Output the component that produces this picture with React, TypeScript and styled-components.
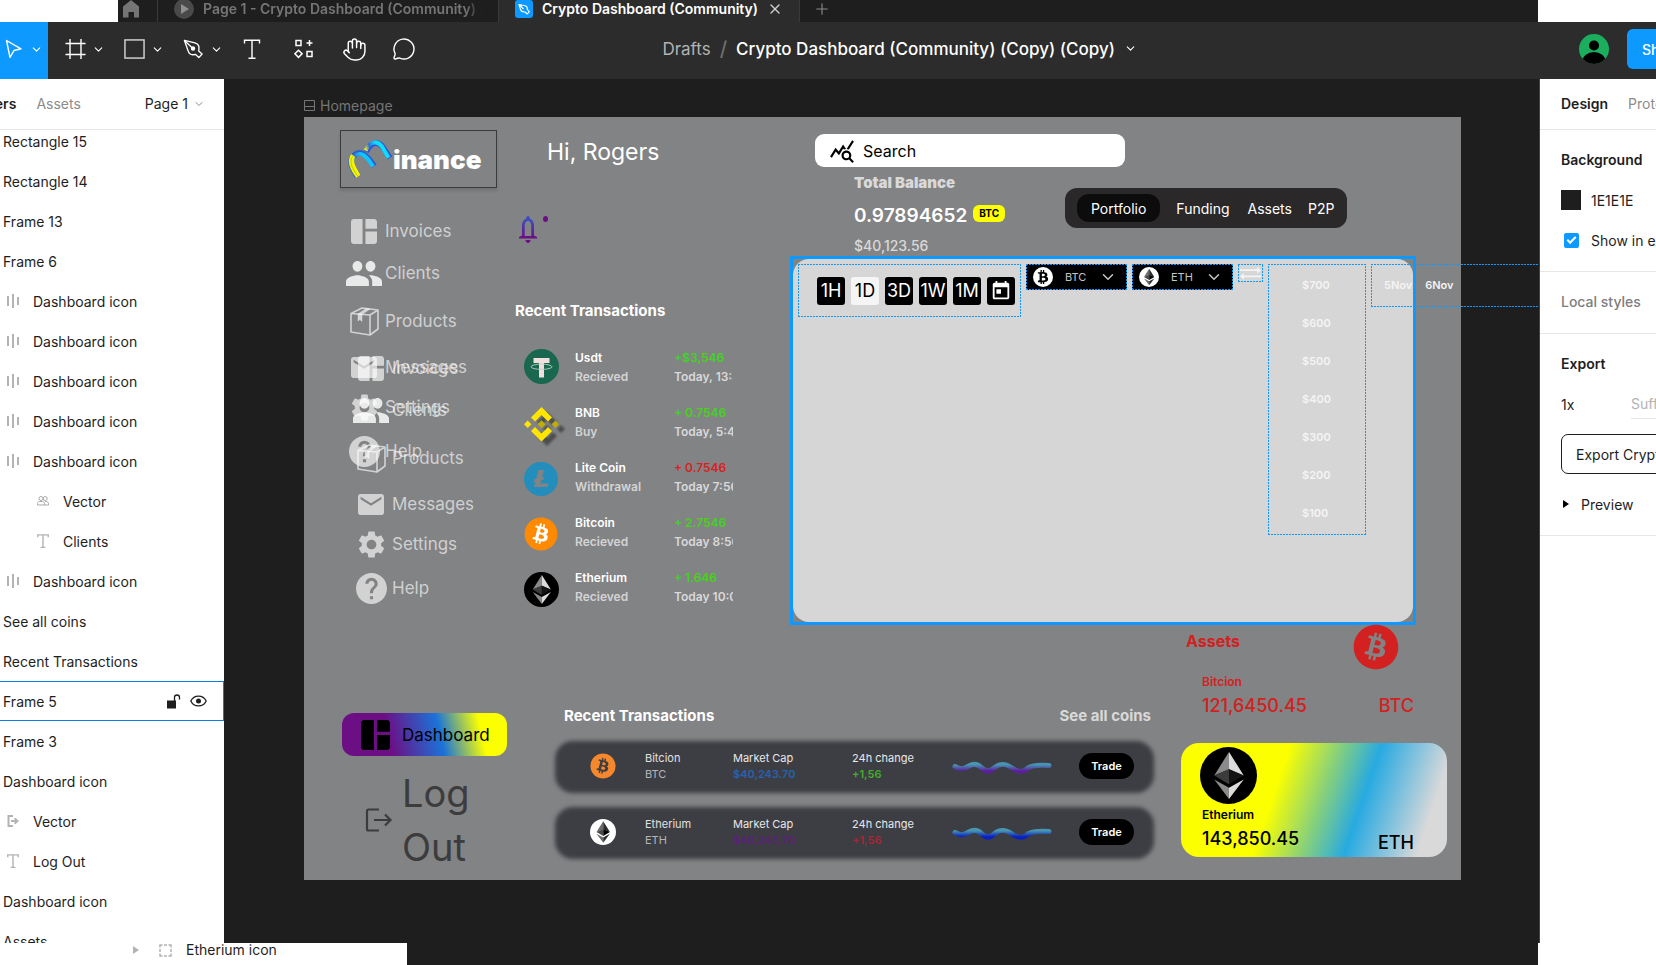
import React from "react";
import styled, { createGlobalStyle, css } from "styled-components";
import { Hand, MessageCircle, ChevronDown, X, Plus } from "lucide-react";
import { MdQueryStats, MdToday } from "react-icons/md";
import { FaBitcoin, FaBtc } from "react-icons/fa";

const BLUE = "#0d99ff";

const Global = createGlobalStyle`
  *, *::before, *::after { box-sizing: border-box; }
  body { margin: 0; background: #fff; font-family: Inter, "Liberation Sans", sans-serif; color: #1e1e1e; }
  button, input, select { font: inherit; color: inherit; margin: 0; padding: 0; border: 0; background: none; }
  ul { list-style: none; margin: 0; padding: 0; }
  h1, h2, h3, p { margin: 0; font-weight: inherit; }
  a { color: inherit; text-decoration: none; }
  svg { display: block; flex: none; }
`;

/* ---------- application shell ---------- */

const Shell = styled.div`
  height: 100vh;
  display: flex;
  flex-direction: column;
  overflow: hidden;
  white-space: nowrap;
`;

const TabStrip = styled.nav`
  flex: none;
  display: flex;
  height: 22px;
  margin: 0 118px;
  background: #1e1e1e;
  color: #757575;
  font-size: 14px;
  font-weight: 600;
`;

const Tab = styled.button<{ $active?: boolean; $width: number }>`
  flex: none;
  width: ${(p) => p.$width}px;
  display: flex;
  align-items: center;
  gap: 9px;
  padding: 0 16px 4px 16px;
  overflow: hidden;
  border-right: 1px solid #3a3a3a;
  background: ${(p) => (p.$active ? "#2c2c2c" : "transparent")};
  color: ${(p) => (p.$active ? "#fff" : "inherit")};
  line-height: 18px;
`;

const TabIconButton = styled.button<{ $divided?: boolean }>`
  width: 40px;
  padding: 0 0 4px 5px;
  display: flex;
  align-items: center;
  ${(p) => p.$divided ? css`border-right: 1px solid #3a3a3a;` : css`padding-left: 13px;`}
`;

const TabLabel = styled.span<{ $fade?: boolean }>`
  flex: 1;
  overflow: hidden;
  text-align: left;
  ${(p) => p.$fade && css`mask-image: linear-gradient(90deg, #000 94%, transparent);`}
`;

const Toolbar = styled.header`
  flex: none;
  height: 57px;
  display: grid;
  grid-template-columns: 40% auto 1fr;
  align-items: center;
  background: #2c2c2c;
  color: #fff;
`;

const Tools = styled.div`
  display: flex;
  align-items: center;
  height: 57px;
`;

const Tool = styled.button<{ $active?: boolean; $wide?: boolean }>`
  height: 57px;
  width: ${(p) => (p.$active ? 48 : p.$wide ? 59 : 50)}px;
  display: flex;
  align-items: center;
  justify-content: ${(p) => (p.$active ? "space-between" : "flex-start")};
  gap: 6px;
  padding: ${(p) => (p.$active ? "0 5px 3px" : "0 0 3px 17px")};
  background: ${(p) => (p.$active ? BLUE : "transparent")};
`;

const FileTitle = styled.button`
  display: flex;
  align-items: center;
  gap: 9px;
  padding-bottom: 4px;
  font-size: 17px;
  font-weight: 500;
  line-height: 24px;
`;
const Muted = styled.span`
  color: #b3b3b3;
  font-weight: 400;
`;
const Slash = styled.span`
  color: #6e6e6e;
  font-size: 20px;
`;

const Account = styled.div`
  display: flex;
  justify-content: flex-end;
  align-items: center;
  gap: 18px;
  padding-bottom: 3px;
  overflow: hidden;
`;
const ShareClip = styled.div`
  width: 29px;
  overflow: hidden;
`;
const ShareButton = styled.button`
  height: 40px;
  padding: 0 15px;
  border-radius: 6px;
  background: ${BLUE};
  color: #fff;
  font-size: 14px;
  font-weight: 500;
`;

const Workspace = styled.div`
  flex: 1;
  min-height: 0;
  display: grid;
  grid-template-columns: 224px minmax(0, 1fr) 116px;
  grid-template-rows: minmax(0, 1fr);
`;

/* ---------- layers panel ---------- */

const Panel = styled.aside`
  min-width: 0;
  display: flex;
  flex-direction: column;
  overflow: hidden;
  background: #fff;
  font-size: 14px;
`;

const PanelTabs = styled.div<{ $shift?: boolean }>`
  flex: none;
  height: 51px;
  display: flex;
  align-items: center;
  gap: 20px;
  padding: 0 0 1px 21px;
  ${(p) => p.$shift && css`
    justify-content: flex-end;
    padding: 0 19px 1px 0;
  `}
  border-bottom: 1px solid #e6e6e6;
`;
const PanelTab = styled.button<{ $on?: boolean }>`
  color: ${(p) => (p.$on ? "#1e1e1e" : "#8c8c8c")};
  font-weight: ${(p) => (p.$on ? 600 : 400)};
`;
const PagePicker = styled.button`
  display: flex;
  align-items: center;
  gap: 5px;
  margin-left: 44px;
`;

const LayerList = styled.ul`
  flex: 1;
  min-height: 0;
  display: flex;
  flex-direction: column;
  overflow: hidden;
  justify-content: flex-start;
`;
const LayerRow = styled.li<{ $level: number; $hover?: boolean }>`
  flex: none;
  height: 40px;
  display: flex;
  align-items: center;
  gap: 10px;
  padding: 0 17px 0 ${(p) => 3 + Math.max(0, p.$level - 1) * 30}px;
  &:first-child { margin-top: -9px; }
  ${(p) => p.$hover && css`box-shadow: inset -1px 1px 0 #0a7fdd, inset 0 -1px 0 #0a7fdd;`}
`;
const LayerIcon = styled.span`
  width: 20px;
  display: flex;
  justify-content: center;
  color: #b3b3b3;
`;
const LayerActions = styled.span`
  margin-left: auto;
  display: flex;
  align-items: center;
  gap: 9px;
`;

const BottomStrip = styled.footer`
  flex: none;
  height: 22px;
  display: grid;
  grid-template-columns: 407px 1fr 118px;
`;
const StripLayer = styled.div`
  display: flex;
  align-items: flex-start;
  gap: 14px;
  padding-left: 133px;
  background: #fff;
  font-size: 14px;
  line-height: 13px;
  svg { margin-top: 1px; }
  svg:first-child { margin: 3px 6px 0 0; }
`;
const StripCanvas = styled.div`
  background: #1e1e1e;
`;

/* ---------- design panel ---------- */

const Section = styled.section`
  display: flex;
  flex-direction: column;
  padding: 10px 0 11px 21px;
  border-bottom: 1px solid #e6e6e6;
`;
const SectionTitle = styled.h2<{ $muted?: boolean }>`
  height: 40px;
  line-height: 40px;
  font-size: 14px;
  font-weight: ${(p) => (p.$muted ? 500 : 600)};
  color: ${(p) => (p.$muted ? "#7d7d7d" : "#1e1e1e")};
`;
const Field = styled.div`
  height: 40px;
  display: flex;
  align-items: center;
  gap: 10px;
`;
const Swatch = styled.span`
  flex: none;
  width: 20px;
  height: 20px;
  background: #1e1e1e;
`;
const TextInput = styled.input<{ $underline?: boolean }>`
  width: 60px;
  height: 30px;
  outline: none;
  &::placeholder { color: #b3b3b3; opacity: 1; }
  ${(p) => p.$underline && css`border-bottom: 1px solid #e6e6e6;`}
`;
const CheckLabel = styled.label`
  display: flex;
  align-items: center;
  gap: 12px;
  padding-left: 3px;
`;
const Check = styled.input`
  appearance: none;
  flex: none;
  width: 15px;
  height: 15px;
  border-radius: 2px;
  background: ${BLUE};
  display: grid;
  place-items: center;
  &:checked::after {
    content: "";
    width: 9px;
    height: 5px;
    border: solid #fff;
    border-width: 0 0 2px 2px;
    transform: rotate(-45deg) translate(1px, -1px);
  }
`;
const ExportButton = styled.button`
  width: 220px;
  height: 40px;
  margin: 10px 0;
  padding-left: 14px;
  text-align: left;
  border: 1px solid #1e1e1e;
  border-radius: 7px;
`;
const PreviewToggle = styled.button`
  height: 40px;
  display: flex;
  align-items: center;
  gap: 12px;
  padding-left: 2px;
`;

/* ---------- canvas and artboard ---------- */

const Canvas = styled.main`
  min-width: 0;
  overflow: hidden;
  padding: 17px 78px 0 80px;
  background: #1e1e1e;
  border-right: 1px solid #444;
`;
const FrameLabel = styled.div`
  height: 21px;
  display: flex;
  align-items: center;
  gap: 5px;
  padding-bottom: 2px;
  color: #757575;
  font-size: 14px;
`;

const Artboard = styled.div`
  display: grid;
  grid-template-columns: 211px minmax(0, 1fr);
  height: 763px;
  background: #828384;
  color: #fff;
`;

const Sidebar = styled.div`
  display: flex;
  flex-direction: column;
  align-items: flex-start;
  padding: 13px 0 0 36px;
`;
const Brand = styled.h1`
  width: 157px;
  height: 58px;
  display: flex;
  align-items: center;
  padding-left: 7px;
  border: 1px solid #3b3b3b;
  box-shadow: 0 3px 3px rgba(0, 0, 0, 0.12);
  font-size: 26px;
  font-weight: 900;
`;
const NavStack = styled.div`
  display: grid;
  margin: 23px 0 101px 6px;
`;
const NavList = styled.ul<{ $lower?: boolean }>`
  grid-area: 1 / 1;
  align-self: start;
  display: grid;
  grid-template-rows: 40px 44px 52px 40px 40px 48px;
  ${(p) => p.$lower && css`margin: 137px 0 0 7px;`}
`;
const NavLink = styled.a`
  height: 100%;
  display: grid;
  grid-template-columns: 36px auto;
  align-items: center;
  justify-items: center;
  gap: 3px;
  color: rgba(255, 255, 255, 0.64);
  font-size: 17px;
  span { justify-self: start; }
`;
const DashboardButton = styled.button`
  width: 165px;
  height: 43px;
  margin-left: 2px;
  padding-left: 19px;
  display: flex;
  align-items: center;
  gap: 12px;
  border-radius: 12px;
  background: linear-gradient(77deg, #6c0f85 29%, #1b73d8 59%, #fbff00 83%);
  color: #000;
  font-size: 17px;
`;
const LogOut = styled.button`
  margin: 10px 0 0 25px;
  display: grid;
  grid-template-columns: 28px 70px;
  gap: 9px;
  align-items: center;
  color: #3c3c3c;
  font-size: 38px;
  line-height: 54px;
  text-align: left;
  white-space: normal;
`;

const Content = styled.div`
  min-width: 0;
  display: flex;
  flex-direction: column;
`;
const TopArea = styled.div`
  display: flex;
  gap: 57px;
  padding-right: 45px;
  height: 508px;
`;

const Activity = styled.section`
  flex: none;
  width: 218px;
  overflow: hidden;
  padding-top: 17px;
`;
const Greeting = styled.p`
  padding-left: 32px;
  font-size: 23px;
  line-height: 36px;
`;
const BellButton = styled.button`
  display: flex;
  align-items: flex-start;
  gap: 6px;
  margin: 46px 0 56px 4px;
`;
const Heading = styled.h2<{ $dim?: boolean }>`
  font-size: 15px;
  font-weight: 700;
  line-height: 24px;
  color: ${(p) => (p.$dim ? "#d9d9d9" : "#fff")};
`;
const TxList = styled.ul`
  margin-top: 16px;
`;
const TxRow = styled.li`
  height: 55px;
  display: grid;
  grid-template-columns: 38px 84px 1fr;
  column-gap: 15px;
  align-items: center;
  padding-left: 7px;
  font-size: 12px;
  line-height: 19px;
  svg { justify-self: center; }
  & + & > svg { margin-top: 5px; }
`;
const TxLine = styled.p<{ $tone?: string }>`
  color: ${(p) => p.$tone || "#fff"};
  font-weight: 600;
`;

const Main = styled.section`
  flex: 1;
  min-width: 0;
  display: flex;
  flex-direction: column;
  padding-top: 17px;
`;
const SearchBox = styled.label`
  width: 310px;
  height: 33px;
  margin-left: 25px;
  display: flex;
  align-items: center;
  gap: 8px;
  padding-left: 14px;
  border-radius: 9px;
  background: #fff;
  color: #000;
  input {
    width: 220px;
    font-size: 16px;
    outline: none;
  }
  input::placeholder { color: #000; opacity: 1; }
`;
const Overview = styled.div`
  height: 89px;
  display: flex;
  align-items: flex-start;
`;
const Balance = styled.div`
  flex: none;
  width: 275px;
  padding: 4px 0 0 64px;
  color: #d9d9d9;
`;
const BalanceTitle = styled.h2`
  font-size: 15px;
  font-weight: 900;
  line-height: 24px;
`;
const BalanceRow = styled.div`
  display: flex;
  gap: 6px;
  align-items: center;
  margin: 7px 0 6px;
`;
const BalanceValue = styled.strong`
  color: #fff;
  font-size: 19px;
  font-weight: 600;
  line-height: 28px;
`;
const CoinBadge = styled.span`
  height: 17px;
  padding: 0 6px;
  margin-bottom: 5px;
  border-radius: 6px;
  background: #fbff00;
  color: #000;
  font-size: 10px;
  font-weight: 700;
  line-height: 17px;
`;
const BalanceFiat = styled.p`
  font-size: 14px;
  font-weight: 500;
  line-height: 20px;
`;
const ViewTabs = styled.nav`
  display: flex;
  align-items: center;
  height: 40px;
  margin-top: 21px;
  padding: 0 13px 0 12px;
  gap: 16px;
  border-radius: 12px;
  background: #2b2829;
`;
const ViewTab = styled.button<{ $on?: boolean }>`
  height: 28px;
  padding: ${(p) => (p.$on ? "0 14px" : "0")};
  border-radius: 12px;
  background: ${(p) => (p.$on ? "#0c0c0c" : "transparent")};
  font-size: 14px;
  &:nth-child(2) { padding-right: 2px; }
`;

const Selection = styled.div`
  height: 369px;
  border: 3px solid ${BLUE};
  background: #828384;
`;
const Chart = styled.div`
  height: 100%;
  display: flex;
  align-items: flex-start;
  gap: 5px;
  padding: 5px 0 0 5px;
  border-radius: 16px;
  background: #d6d6d6;
`;
const stripes = (angle: string) =>
  `repeating-linear-gradient(${angle}, ${BLUE} 0 2px, transparent 2px 3px)`;
const dotted = css<{ $fill?: string }>`
  flex: none;
  background:
    ${stripes("90deg")} top / 100% 1px no-repeat,
    ${stripes("90deg")} bottom / 100% 1px no-repeat,
    ${stripes("0deg")} left / 1px 100% no-repeat,
    ${stripes("0deg")} right / 1px 100% no-repeat,
    ${(p) => p.$fill || "transparent"};
`;
const RangeGroup = styled.div`
  ${dotted}
  width: 223px;
  height: 53px;
  display: flex;
  align-items: center;
  gap: 6px;
  padding-left: 19px;
`;
const RangeButton = styled.button<{ $on?: boolean }>`
  width: 28px;
  height: 28px;
  display: grid;
  place-items: center;
  border-radius: 3px;
  background: ${(p) => (p.$on ? "#f5f5f5" : "#000")};
  color: ${(p) => (p.$on ? "#000" : "#fff")};
  font-size: 18px;
`;
const CoinSelect = styled.label`
  ${dotted}
  width: 101px;
  height: 26px;
  display: flex;
  align-items: center;
  padding: 0 10px 0 7px;
  color: #c4c4c4;
  font-size: 11px;
  select {
    flex: 1;
    min-width: 0;
    appearance: none;
    outline: none;
    padding-left: 12px;
  }
`;
const SwapButton = styled.button`
  ${dotted}
  width: 25px;
  height: 18px;
  display: grid;
  place-items: center;
`;
const Axis = styled.ul<{ $dates?: boolean }>`
  ${dotted}
  display: flex;
  color: #f4f4f4;
  font-size: 11px;
  font-weight: 600;
  line-height: 38px;
  ${(p) => p.$dates
    ? css`width: 400px; height: 43px; gap: 13px; padding: 2px 0 0 13px; margin-right: -280px;`
    : css`width: 98px; height: 271px; flex-direction: column; padding: 2px 0 0 34px;`}
`;

const BottomArea = styled.div`
  display: flex;
  gap: 27px;
  padding: 0 14px 0 40px;
`;
const Markets = styled.section`
  flex: 1;
  min-width: 0;
  padding-top: 79px;
`;
const MarketsHead = styled.div`
  display: flex;
  justify-content: space-between;
  padding: 0 3px 0 9px;
  margin-bottom: 13px;
`;
const MarketRow = styled.li`
  position: relative;
  isolation: isolate;
  height: 52px;
  margin-bottom: 14px;
  display: grid;
  grid-template-columns: 55px 88px 119px 101px 1fr auto;
  align-items: center;
  padding: 0 20px 3px 35px;
  font-size: 11px;
  line-height: 16px;
  &::before {
    content: "";
    position: absolute;
    inset: 0;
    z-index: -1;
    border-radius: 18px;
    background: #3d3e44;
    filter: blur(2px);
  }
`;
const Tone = styled.p<{ $tone: string; $strong?: boolean }>`
  color: ${(p) => p.$tone};
  font-weight: ${(p) => (p.$strong ? 600 : 400)};
`;
const TradeButton = styled.button`
  width: 55px;
  height: 26px;
  border-radius: 13px;
  background: #000;
  font-size: 11px;
  font-weight: 600;
`;

const Assets = styled.section`
  flex: none;
  width: 266px;
`;
const AssetHead = styled.div`
  height: 46px;
  display: flex;
  justify-content: space-between;
  padding: 0 48px 0 5px;
  color: #d32020;
  h2 { font-size: 16px; font-weight: 700; line-height: 32px; }
  svg { margin-top: -1px; }
`;
const AssetBody = styled.div<{ $tone: string }>`
  padding: 1px 33px 0 21px;
  color: ${(p) => p.$tone};
  font-weight: 500;
`;
const AssetName = styled.p`
  font-size: 12px;
  line-height: 20px;
  font-weight: 600;
`;
const AssetValue = styled.p<{ $drop?: boolean }>`
  display: flex;
  justify-content: space-between;
  font-size: 18px;
  line-height: 28px;
  ${(p) => p.$drop && css`span:last-child { margin-top: 4px; }`}
`;
const AssetCard = styled.div`
  height: 114px;
  margin-top: 23px;
  padding-top: 4px;
  border-radius: 18px;
  background: linear-gradient(109deg, #fbff00 36%, #27aae1 66%, #d9d9d9 90%);
  > svg { margin-left: 19px; }
`;

/* ---------- drawings ---------- */

const Chev = ({ size = 14, color = "#fff" }: { size?: number; color?: string }) => (
  <ChevronDown size={size} color={color} strokeWidth={2} />
);

const CursorIcon = () => (
  <svg width="17" height="20" viewBox="0 0 17 20" fill="none" stroke="#fff" strokeWidth="1.4" strokeLinejoin="round">
    <path d="M1.5 1.5l14.5 8.3-7 1.7-4 6.8z" />
  </svg>
);
const FrameIcon = () => (
  <svg width="21" height="20" viewBox="0 0 20 20" stroke="#fff" strokeWidth="1.4">
    <path d="M4.5 0v20M15.5 0v20M0 4.5h20M0 15.5h20" />
  </svg>
);
const RectIcon = () => (
  <svg width="21" height="22" viewBox="0 0 22 22" fill="none" stroke="#d6d6d6" strokeWidth="1.5">
    <rect x="1" y="1.5" width="20" height="19" />
  </svg>
);
const PenIcon = () => (
  <svg width="21" height="22" viewBox="0 0 22 22" fill="none" stroke="#fff" strokeWidth="1.4" strokeLinejoin="round">
    <path d="M1.5 2l11 2.600c3 .8 4.600 3.400 4.200 6.400l-.3 2 3.600 3.200-3.400 3.800-3.400-3.300-2.300.3c-2.800.2-4.700-1.200-5.500-4z" />
    <path d="M1.500 2l8.300 8" />
    <circle cx="10.500" cy="10.500" r="1.600" fill="#fff" />
  </svg>
);
const TextIcon = ({ size = 20, color = "#fff", w = 1.4 }: { size?: number; color?: string; w?: number }) => (
  <svg width={size} height={size} viewBox="0 0 20 20" fill="none" stroke={color} strokeWidth={w}>
    <path d="M2.500 4.500V1.200h15v3.300M10 1.200v18M6.500 19.200h7" />
  </svg>
);
const ResourcesIcon = () => (
  <svg width="22" height="20" viewBox="-1 0 20 20" fill="none" stroke="#fff" strokeWidth="1.5">
    <rect x="2" y="1.500" width="5" height="5" />
    <rect x="13" y="12.500" width="5" height="5" />
    <path d="M15.500 1v6M12.500 4h6M4.500 11.200l3.600 3.600-3.600 3.600-3.600-3.600z" />
  </svg>
);
const HomeIcon = () => (
  <svg width="16" height="18" viewBox="0 0 16 18" fill="#757575">
    <path d="M8 0l8 6.500V17.500h-5V12H5.500v5.500H0V6.500z" />
  </svg>
);
const PlayBadge = () => (
  <svg width="20" height="20" viewBox="0 0 20 20">
    <circle cx="10" cy="10" r="10" fill="#4a4a4a" />
    <path d="M7 5l8 5-8 5z" fill="#8f8f8f" />
  </svg>
);
const FileBadge = () => (
  <svg width="18" height="18" viewBox="0 0 18 18" fill="none" stroke="#fff" strokeWidth="1.100" strokeLinejoin="round">
    <rect width="18" height="18" rx="3" fill={BLUE} stroke="none" />
    <path d="M4 4.500l6 1.200c1.800.5 2.600 2 2.300 3.800l2 2.200-2 2.300-2.200-2c-2.600.3-4.200-.7-4.700-2.800zM4 4.500l4.500 4.500" />
  </svg>
);
const Avatar = () => (
  <svg width="30" height="30" viewBox="0 0 30 30">
    <clipPath id="avatar"><circle cx="15" cy="15" r="15" /></clipPath>
    <g clipPath="url(#avatar)">
      <rect width="30" height="30" fill="#1bae5e" />
      <circle cx="15" cy="11.500" r="5" />
      <ellipse cx="15" cy="27" rx="11.500" ry="9" />
    </g>
  </svg>
);

const BarsIcon = () => (
  <svg width="13" height="14" viewBox="0 0 13 14" fill="#b3b3b3">
    <rect y="2" width="2" height="10" /><rect x="5" width="2" height="14" /><rect x="10" y="3" width="2" height="8" />
  </svg>
);
const PeopleMini = () => (
  <svg width="12" height="12" viewBox="0 0 12 12" fill="none" stroke="#a8a8a8">
    <circle cx="4" cy="3.500" r="2" /><circle cx="8.200" cy="3.500" r="2" />
    <path d="M.5 10V8.500C.5 7 2 6.500 4 6.500s3.500.5 3.500 2V10zM8 6.500c2 0 3.500.5 3.500 2V10h-4" />
  </svg>
);
const ExitMini = () => (
  <svg width="13" height="12" viewBox="0 0 13 12" fill="none" stroke="#b3b3b3" strokeWidth="2">
    <path d="M6 1H1.500v10H6M4 6h4" /><path d="M8 3l3.500 3L8 9z" fill="#b3b3b3" stroke="#b3b3b3" strokeWidth="1" />
  </svg>
);
const UnlockIcon = () => (
  <svg width="14" height="15" viewBox="0 0 14 15">
    <rect x="0" y="6.500" width="9" height="8" fill="#1e1e1e" />
    <path d="M7.500 7V3.500a2.500 2.500 0 0 1 5 0V5.500" fill="none" stroke="#1e1e1e" strokeWidth="1.300" />
  </svg>
);
const EyeIcon = () => (
  <svg width="17" height="12" viewBox="0 0 17 12">
    <path d="M.8 6C4 -.6 13 -.6 16.200 6 13 12.600 4 12.600.8 6z" fill="none" stroke="#1e1e1e" strokeWidth="1.300" />
    <circle cx="8.500" cy="6" r="2.500" fill="#1e1e1e" />
  </svg>
);
const Triangle = ({ color }: { color: string }) => (
  <svg width="6" height="8" viewBox="0 0 6 8"><path d="M0 0l6 4-6 4z" fill={color} /></svg>
);
const DashedFrame = () => (
  <svg width="13" height="13" viewBox="0 0 13 13" fill="none" stroke="#b3b3b3" strokeWidth="1.500">
    <path d="M1 3.500V1h2.500M5 1h3M9.500 1H12v2.500M12 5v3M12 9.500V12H9.500M8 12H5M3.500 12H1V9.500M1 8V5" />
  </svg>
);

const LogoMark = () => (
  <svg width="45" height="38" viewBox="51 50 135 115" fill="none">
    <defs>
      <linearGradient id="mLow" x1="0" y1="1" x2="1" y2="0.300">
        <stop offset="0.300" stopColor="#fbff00" /><stop offset="0.500" stopColor="#3a76c8" /><stop offset="0.750" stopColor="#12c4ff" />
      </linearGradient>
      <linearGradient id="mHigh" x1="0" y1="0.800" x2="1" y2="0.500">
        <stop offset="0.080" stopColor="#e8f020" /><stop offset="0.300" stopColor="#2c6fd8" /><stop offset="0.600" stopColor="#10dcff" />
      </linearGradient>
    </defs>
    <path d="M106 86C118 58 142 50 156 72L177 104" stroke="#2b55d6" strokeWidth="17" />
    <path d="M104 82C116 55 138 50 152 68L173 104" stroke="url(#mHigh)" strokeWidth="12" />
    <path d="M78 160C62 134 52 112 68 97 90 77 108 96 130 129" stroke="#2b5fd0" strokeWidth="17" />
    <path d="M82 158C66 132 56 114 70 100 90 82 106 98 126 130" stroke="url(#mLow)" strokeWidth="12" />
    <path d="M81 160C62 134 54 112 66 97" stroke="#f2f500" strokeWidth="15" />
    <path d="M80 160C61 134 53 114 65 99" stroke="#8a8f10" strokeWidth="1.500" />
  </svg>
);

const TilesIcon = ({ w = 26, h = 25 }: { w?: number; h?: number }) => (
  <svg width={w} height={h} viewBox="3 3 18 18" preserveAspectRatio="none" fill="currentColor">
    <path d="M11 21H5c-1.100 0-2-.9-2-2V5c0-1.100.9-2 2-2h6v18zm2 0h6c1.100 0 2-.9 2-2v-7h-8v9zm8-11V5c0-1.100-.9-2-2-2h-6v7h8z" />
  </svg>
);
const ClientsIcon = () => (
  <svg width="36" height="25" viewBox="1 5 22 14" preserveAspectRatio="none" fill="rgba(255,255,255,.82)">
    <path d="M16 11c1.660 0 2.990-1.340 2.990-3S17.660 5 16 5c-1.660 0-3 1.340-3 3s1.340 3 3 3zm-8 0c1.660 0 2.990-1.340 2.990-3S9.660 5 8 5C6.340 5 5 6.340 5 8s1.340 3 3 3zm0 2c-2.330 0-7 1.170-7 3.500V19h14v-2.500c0-2.330-4.670-3.500-7-3.500zm8 0c-.29 0-.62.02-.97.05 1.160.84 1.970 1.970 1.970 3.450V19h6v-2.500c0-2.330-4.670-3.500-7-3.500z" />
  </svg>
);
const BoxIcon = () => (
  <svg width="29" height="29" viewBox="0 0 29 29" fill="none" stroke="currentColor" strokeWidth="1.600" strokeLinejoin="round">
    <path d="M1 6.500L12 1l16 2-8 5zM1 6.500V25l19 3V8M28 3v19l-8 6" />
    <path d="M8 7l8-5.500 4 .6L12 7.500v7L9.800 12.500 8 14z" fill="currentColor" strokeWidth="0.500" />
  </svg>
);
const MailIcon = () => (
  <svg width="26" height="21" viewBox="2 4 20 16" preserveAspectRatio="none" fill="currentColor">
    <path d="M20 4H4c-1.100 0-1.990.9-1.990 2L2 18c0 1.100.9 2 2 2h16c1.100 0 2-.9 2-2V6c0-1.100-.9-2-2-2zm0 4l-8 5-8-5V6l8 5 8-5v2z" />
  </svg>
);
const GearIcon = () => (
  <svg width="27" height="27" viewBox="2 2 20 20" fill="currentColor">
    <path d="M19.140 12.940c.04-.3.060-.61.060-.94 0-.32-.02-.64-.07-.94l2.030-1.580c.18-.14.23-.41.12-.61l-1.920-3.320c-.12-.22-.37-.29-.59-.22l-2.390.96c-.5-.38-1.030-.7-1.620-.94l-.36-2.540c-.04-.24-.24-.41-.48-.41h-3.840c-.24 0-.43.17-.47.41l-.36 2.540c-.59.24-1.130.57-1.620.94l-2.390-.96c-.22-.08-.47 0-.59.22L2.740 8.870c-.12.21-.08.47.12.61l2.030 1.580c-.05.3-.09.63-.09.94s.02.64.07.94l-2.030 1.580c-.18.14-.23.41-.12.61l1.920 3.320c.12.22.37.29.59.22l2.390-.96c.5.38 1.030.7 1.620.94l.36 2.540c.05.24.24.41.48.41h3.840c.24 0 .44-.17.47-.41l.36-2.540c.59-.24 1.130-.56 1.620-.94l2.390.96c.22.08.47 0 .59-.22l1.920-3.320c.12-.22.070-.47-.12-.61l-2.010-1.580zM12 15.600c-1.980 0-3.600-1.620-3.600-3.600s1.620-3.600 3.600-3.600 3.600 1.620 3.600 3.600-1.620 3.600-3.600 3.600z" />
  </svg>
);
const HelpIcon = () => (
  <svg width="31" height="31" viewBox="2 2 20 20" fill="currentColor">
    <path d="M12 2C6.480 2 2 6.480 2 12s4.480 10 10 10 10-4.480 10-10S17.520 2 12 2zm1 17h-2v-2h2v2zm2.070-7.750l-.9.920C13.450 12.900 13 13.500 13 15h-2v-.5c0-1.100.45-2.100 1.170-2.830l1.240-1.260c.37-.36.59-.86.59-1.410 0-1.100-.9-2-2-2s-2 .9-2 2H8c0-2.210 1.790-4 4-4s4 1.790 4 4c0 .88-.36 1.680-.93 2.250z" />
  </svg>
);
const ExitIcon = () => (
  <svg width="28" height="24" viewBox="0 0 28 24" fill="none" stroke="#3c3c3c" strokeWidth="2.200">
    <path d="M14 1.500H3.500a1.500 1.500 0 0 0-1.500 1.500V21a1.500 1.500 0 0 0 1.500 1.500H14M9 12h16.500M20 6.500l5.500 5.500-5.500 5.500" />
  </svg>
);
const BellIcon = () => (
  <svg width="18" height="27" viewBox="0 0 18 27">
    <defs>
      <linearGradient id="bell" x1="0" y1="0" x2="0" y2="1">
        <stop offset="0.150" stopColor="#3b4cc0" /><stop offset="0.800" stopColor="#6c0f85" />
      </linearGradient>
    </defs>
    <path fill="url(#bell)" fillRule="evenodd" d="M9 0c1.200 0 1.800 1 1.800 2.500C13.700 3.600 15 6.500 15 10v9.500l3 1.500v1.500H0V21l3-1.500V10c0-3.500 1.300-6.400 4.200-7.500C7.200 1 7.800 0 9 0zM9 5C6.700 5 5.700 7.500 5.700 10v10h6.600V10C12.300 7.500 11.300 5 9 5zM6.500 24h5c0 1.500-1 3-2.500 3s-2.500-1.500-2.500-3z" />
  </svg>
);
const Dot = () => (
  <svg width="5" height="6" viewBox="0 0 5 6"><ellipse cx="2.500" cy="3" rx="2.500" ry="3" fill="#6c0f85" /></svg>
);

const EthIcon = ({ size, light }: { size: number; light?: boolean }) => {
  const c = light
    ? ["#6b6b6b", "#2b2b2b", "#4a4a4a", "#000"]
    : ["#8a8a8c", "#dcdcdc", "#3c3c3d", "#141414"];
  return (
    <svg width={size} height={size} viewBox="0 0 58 58">
      <circle cx="29" cy="29" r="29" fill={light ? "#fff" : "#000"} />
      <path d="M29.500 5L14.500 29l15-6z" fill={c[0]} />
      <path d="M29.500 5l15 24-15-6z" fill={c[1]} />
      <path d="M29.500 22.500l-15 6.500 15 9z" fill={c[2]} />
      <path d="M29.500 22.500l15 6.500-15 9z" fill={c[3]} />
      <path d="M14.500 33l15 8.500V53z" fill={c[0]} />
      <path d="M44.500 33l-15 8.500V53z" fill={c[1]} />
    </svg>
  );
};
const TetherIcon = () => (
  <svg width="35" height="35" viewBox="0 0 35 35">
    <circle cx="17.500" cy="17.500" r="17.500" fill="#19674e" />
    <path d="M9.500 9h16v5h-5.500v14.500h-5V14H9.500z" fill="#f1dede" />
    <ellipse cx="17.500" cy="17.800" rx="10.500" ry="2.600" fill="none" stroke="#b9cfc6" strokeWidth="0.900" />
  </svg>
);
const BnbIcon = () => (
  <svg width="35" height="35" viewBox="0 0 35 35" overflow="visible">
    <defs><filter id="soft" x="-20%" y="-20%" width="150%" height="150%"><feGaussianBlur stdDeviation="1.300" /></filter></defs>
    <g transform="translate(6 5)" fill="#3a3a3a" opacity="0.750" filter="url(#soft)">
      <path d="M17 0l10 10-4 4-6-6-6 6-4-4zM17 34l10-10-4-4-6 6-6-6-4 4zM17 13l4 4-4 4-4-4zM31 13l4 4-4 4-4-4z" />
    </g>
    <path d="M17.500 0l10.500 10.500-4 4-6.500-6.500-6.500 6.500-4-4zM17.500 34.500L28 24l-4-4-6.500 6.500L11 20l-4 4zM3.700 13.500L7.400 17.200l-3.700 3.700L0 17.200z" fill="#ffe600" />
    <path d="M17.500 13.200l4 4-4 4-4-4zM31.300 13.500l3.700 3.700-3.700 3.700-3.700-3.700z" fill="#c0ae00" />
  </svg>
);
const LitecoinIcon = () => (
  <svg width="34" height="34" viewBox="0 0 34 34">
    <circle cx="17" cy="17" r="17" fill="#238dbb" />
    <path d="M14.500 8h5.500l-2 7.500 2.500-1-.8 3-2.500 1-.8 3H24.500L23.300 25H10l1.400-5.200-2.100.8.800-3 2.100-.8z" fill="#828384" />
  </svg>
);
const BitcoinDisc = styled(FaBitcoin)<{ $ink: string }>`
  border-radius: 50%;
  background: radial-gradient(${(p) => p.$ink} 60%, transparent 62%);
`;
const WhiteCoin = styled.span`
  flex: none;
  width: 20px;
  height: 20px;
  display: grid;
  place-items: center;
  border-radius: 50%;
  background: #fff;
  color: #000;
`;
const SwapIcon = () => (
  <svg width="23" height="14" viewBox="0 0 24 14" fill="none" stroke="#f4f4f4" strokeWidth="2">
    <path d="M1 4h19M23 10.500H4" /><path d="M19 .5v7l4-3.500zM5 7v7l-4-3.500z" fill="#f4f4f4" stroke="none" />
  </svg>
);
const WaveDrawing = styled.svg`
  margin: 4px 0 0 -1px;
`;
const Wave = ({ id, low }: { id: string; low: string }) => (
  <WaveDrawing width="100" height="16" viewBox="0 0 100 16" fill="none">
    <defs>
      <linearGradient id={id} gradientUnits="userSpaceOnUse" x1="0" y1="2" x2="0" y2="13">
        <stop offset="0.250" stopColor="#4795b0" /><stop offset="0.800" stopColor={low} />
      </linearGradient>
    </defs>
    <path d="M3 6.500C9 10 12 9 17 6 22 3 26 4 30 8 34 12 38 12 42 8 48 3 53 3 60 8 66 12 71 13 76 8 81 5 90 5 97 5.500" stroke={`url(#${id})`} strokeWidth="5" strokeLinecap="round" />
  </WaveDrawing>
);

/* ---------- data ---------- */

const navItems: [string, React.ReactNode][] = [
  ["Invoices", <TilesIcon />],
  ["Clients", <ClientsIcon />],
  ["Products", <BoxIcon />],
  ["Messages", <MailIcon />],
  ["Settings", <GearIcon />],
  ["Help", <HelpIcon />],
];

const layers: { name: string; level: number; icon?: React.ReactNode; hover?: boolean }[] = [
  { name: "Rectangle 15", level: 0 },
  { name: "Rectangle 14", level: 0 },
  { name: "Frame 13", level: 0 },
  { name: "Frame 6", level: 0 },
  { name: "Dashboard icon", level: 1, icon: <BarsIcon /> },
  { name: "Dashboard icon", level: 1, icon: <BarsIcon /> },
  { name: "Dashboard icon", level: 1, icon: <BarsIcon /> },
  { name: "Dashboard icon", level: 1, icon: <BarsIcon /> },
  { name: "Dashboard icon", level: 1, icon: <BarsIcon /> },
  { name: "Vector", level: 2, icon: <PeopleMini /> },
  { name: "Clients", level: 2, icon: <TextIcon size={14} color="#b3b3b3" w={2} /> },
  { name: "Dashboard icon", level: 1, icon: <BarsIcon /> },
  { name: "See all coins", level: 0 },
  { name: "Recent Transactions", level: 0 },
  { name: "Frame 5", level: 0, hover: true },
  { name: "Frame 3", level: 0 },
  { name: "Dashboard icon", level: 0 },
  { name: "Vector", level: 1, icon: <ExitMini /> },
  { name: "Log Out", level: 1, icon: <TextIcon size={14} color="#b3b3b3" w={2} /> },
  { name: "Dashboard icon", level: 0 },
  { name: "Assets", level: 0 },
];

const GREEN = "#45d31c";
const transactions = [
  { coin: "Usdt", kind: "Recieved", amount: "+$3,546", when: "Today, 13:45", tone: GREEN, icon: <TetherIcon /> },
  { coin: "BNB", kind: "Buy", amount: "+ 0.7546", when: "Today, 5:45", tone: GREEN, icon: <BnbIcon /> },
  { coin: "Lite Coin", kind: "Withdrawal", amount: "+ 0.7546", when: "Today 7:56", tone: "#d91f1f", icon: <LitecoinIcon /> },
  { coin: "Bitcoin", kind: "Recieved", amount: "+ 2.7546", when: "Today 8:56", tone: GREEN, icon: <BitcoinDisc size={34} color="#ff8a00" $ink="#fff" /> },
  { coin: "Etherium", kind: "Recieved", amount: "+ 1.646", when: "Today 10:05", tone: GREEN, icon: <EthIcon size={35} /> },
];

const markets = [
  { coin: "Bitcion", code: "BTC", capTone: "#2662b0", change: "#44ad2b", low: "#5b1f9e", icon: <BitcoinDisc size={26} color="#f5882d" $ink="#3d3e44" /> },
  { coin: "Etherium", code: "ETH", capTone: "#5d1e78", change: "#a82633", low: "#0a1fc0", icon: <EthIcon size={26} light /> },
];

const prices = ["$700", "$600", "$500", "$400", "$300", "$200", "$100"];

/* ---------- page ---------- */

const Nav = ({ lower }: { lower?: boolean }) => (
  <NavList $lower={lower}>
    {navItems.map(([name, icon]) => (
      <li key={name}>
        <NavLink href="#">{icon}<span>{name}</span></NavLink>
      </li>
    ))}
  </NavList>
);

export default function App() {
  return (
    <Shell>
      <Global />
      <TabStrip>
        <TabIconButton $divided aria-label="Home"><HomeIcon /></TabIconButton>
        <Tab $width={341}>
          <PlayBadge />
          <TabLabel $fade>Page 1 - Crypto Dashboard (Community) (Copy)</TabLabel>
        </Tab>
        <Tab $active $width={301}>
          <FileBadge />
          <TabLabel>Crypto Dashboard (Community)</TabLabel>
          <X size={16} color="#d0d0d0" />
        </Tab>
        <TabIconButton aria-label="New tab"><Plus size={18} color="#8a8a8a" strokeWidth={1.5} /></TabIconButton>
      </TabStrip>

      <Toolbar>
        <Tools>
          <Tool $active aria-label="Move"><CursorIcon /><Chev size={13} /></Tool>
          <Tool $wide aria-label="Frame"><FrameIcon /><Chev size={13} /></Tool>
          <Tool $wide aria-label="Rectangle"><RectIcon /><Chev size={13} /></Tool>
          <Tool $wide aria-label="Pen"><PenIcon /><Chev size={13} /></Tool>
          <Tool aria-label="Text"><TextIcon /></Tool>
          <Tool aria-label="Resources"><ResourcesIcon /></Tool>
          <Tool aria-label="Hand"><Hand size={25} strokeWidth={1.4} /></Tool>
          <Tool aria-label="Comment"><MessageCircle size={24} strokeWidth={1.4} /></Tool>
        </Tools>
        <FileTitle>
          <Muted>Drafts</Muted>
          <Slash>/</Slash>
          <span>Crypto Dashboard (Community) (Copy) (Copy)</span>
          <Chev size={13} />
        </FileTitle>
        <Account>
          <Avatar />
          <ShareClip><ShareButton>Share</ShareButton></ShareClip>
        </Account>
      </Toolbar>

      <Workspace>
        <Panel>
          <PanelTabs $shift>
            <PanelTab $on>Layers</PanelTab>
            <PanelTab>Assets</PanelTab>
            <PagePicker>Page 1 <Chev size={12} color="#8c8c8c" /></PagePicker>
          </PanelTabs>
          <LayerList>
            {layers.map((l, i) => (
              <LayerRow key={i} $level={l.level} $hover={l.hover}>
                {l.icon && <LayerIcon>{l.icon}</LayerIcon>}
                {l.name}
                {l.hover && <LayerActions><UnlockIcon /><EyeIcon /></LayerActions>}
              </LayerRow>
            ))}
          </LayerList>
        </Panel>

        <Canvas>
          <FrameLabel>
            <svg width="11" height="11" viewBox="0 0 11 11" fill="none" stroke="#757575"><path d="M.5.5h10v10H.5zM.5 6.500h10" /></svg>
            Homepage
          </FrameLabel>
          <Artboard>
            <Sidebar>
              <Brand><LogoMark />inance</Brand>
              <NavStack><Nav /><Nav lower /></NavStack>
              <DashboardButton><TilesIcon w={29} h={30} />Dashboard</DashboardButton>
              <LogOut><ExitIcon />Log Out</LogOut>
            </Sidebar>

            <Content>
              <TopArea>
                <Activity>
                  <Greeting>Hi, Rogers</Greeting>
                  <BellButton aria-label="Notifications"><BellIcon /><Dot /></BellButton>
                  <Heading>Recent Transactions</Heading>
                  <TxList>
                    {transactions.map((t) => (
                      <TxRow key={t.coin}>
                        {t.icon}
                        <div>
                          <TxLine>{t.coin}</TxLine>
                          <TxLine $tone="#d4d4d4">{t.kind}</TxLine>
                        </div>
                        <div>
                          <TxLine $tone={t.tone}>{t.amount}</TxLine>
                          <TxLine $tone="#d9d9d9">{t.when}</TxLine>
                        </div>
                      </TxRow>
                    ))}
                  </TxList>
                </Activity>

                <Main>
                  <SearchBox>
                    <MdQueryStats size={26} />
                    <input type="search" placeholder="Search" aria-label="Search" />
                  </SearchBox>
                  <Overview>
                    <Balance>
                      <BalanceTitle>Total Balance</BalanceTitle>
                      <BalanceRow><BalanceValue>0.97894652</BalanceValue><CoinBadge>BTC</CoinBadge></BalanceRow>
                      <BalanceFiat>$40,123.56</BalanceFiat>
                    </Balance>
                    <ViewTabs>
                      <ViewTab $on>Portfolio</ViewTab>
                      <ViewTab>Funding</ViewTab>
                      <ViewTab>Assets</ViewTab>
                      <ViewTab>P2P</ViewTab>
                    </ViewTabs>
                  </Overview>
                  <Selection>
                    <Chart>
                      <RangeGroup>
                        {["1H", "1D", "3D", "1W", "1M"].map((r) => (
                          <RangeButton key={r} $on={r === "1D"}>{r}</RangeButton>
                        ))}
                        <RangeButton aria-label="Pick dates"><MdToday size={22} /></RangeButton>
                      </RangeGroup>
                      <CoinSelect $fill="#000">
                        <WhiteCoin><FaBtc size={14} /></WhiteCoin>
                        <select aria-label="From coin" defaultValue="BTC"><option>BTC</option></select>
                        <Chev size={18} color="#c4c4c4" />
                      </CoinSelect>
                      <CoinSelect $fill="#000">
                        <EthIcon size={20} light />
                        <select aria-label="To coin" defaultValue="ETH"><option>ETH</option></select>
                        <Chev size={18} color="#c4c4c4" />
                      </CoinSelect>
                      <SwapButton aria-label="Swap"><SwapIcon /></SwapButton>
                      <Axis>{prices.map((p) => <li key={p}>{p}</li>)}</Axis>
                      <Axis $dates><li>5Nov</li><li>6Nov</li></Axis>
                    </Chart>
                  </Selection>
                </Main>
              </TopArea>

              <BottomArea>
                <Markets>
                  <MarketsHead>
                    <Heading>Recent Transactions</Heading>
                    <Heading $dim><a href="#">See all coins</a></Heading>
                  </MarketsHead>
                  <ul>
                    {markets.map((m) => (
                      <MarketRow key={m.code}>
                        {m.icon}
                        <div><Tone $tone="#e0e0e0">{m.coin}</Tone><Tone $tone="#b5b5b8">{m.code}</Tone></div>
                        <div><Tone $tone="#e8e8e8">Market Cap</Tone><Tone $tone={m.capTone} $strong>$40,243.70</Tone></div>
                        <div><Tone $tone="#e8e8e8">24h change</Tone><Tone $tone={m.change} $strong>+1,56</Tone></div>
                        <Wave id={`wave-${m.code}`} low={m.low} />
                        <TradeButton>Trade</TradeButton>
                      </MarketRow>
                    ))}
                  </ul>
                </Markets>

                <Assets>
                  <AssetHead><h2>Assets</h2><FaBitcoin size={46} /></AssetHead>
                  <AssetBody $tone="#d32020">
                    <AssetName>Bitcion</AssetName>
                    <AssetValue><span>121,6450.45</span><span>BTC</span></AssetValue>
                  </AssetBody>
                  <AssetCard>
                    <EthIcon size={57} />
                    <AssetBody $tone="#000">
                      <AssetName>Etherium</AssetName>
                      <AssetValue $drop><span>143,850.45</span><span>ETH</span></AssetValue>
                    </AssetBody>
                  </AssetCard>
                </Assets>
              </BottomArea>
            </Content>
          </Artboard>
        </Canvas>

        <Panel>
          <PanelTabs>
            <PanelTab $on>Design</PanelTab>
            <PanelTab>Prototype</PanelTab>
          </PanelTabs>
          <Section>
            <SectionTitle>Background</SectionTitle>
            <Field><Swatch /><TextInput aria-label="Background colour" defaultValue="1E1E1E" /></Field>
            <Field><CheckLabel><Check type="checkbox" defaultChecked />Show in exports</CheckLabel></Field>
          </Section>
          <Section>
            <SectionTitle $muted>Local styles</SectionTitle>
          </Section>
          <Section>
            <SectionTitle>Export</SectionTitle>
            <Field>
              <TextInput aria-label="Scale" defaultValue="1x" />
              <TextInput $underline aria-label="Suffix" placeholder="Suffix" />
            </Field>
            <ExportButton>Export Crypto Dashboard</ExportButton>
            <PreviewToggle><Triangle color="#000" />Preview</PreviewToggle>
          </Section>
        </Panel>
      </Workspace>

      <BottomStrip>
        <StripLayer><Triangle color="#b3b3b3" /><DashedFrame />Etherium icon</StripLayer>
        <StripCanvas />
      </BottomStrip>
    </Shell>
  );
}
